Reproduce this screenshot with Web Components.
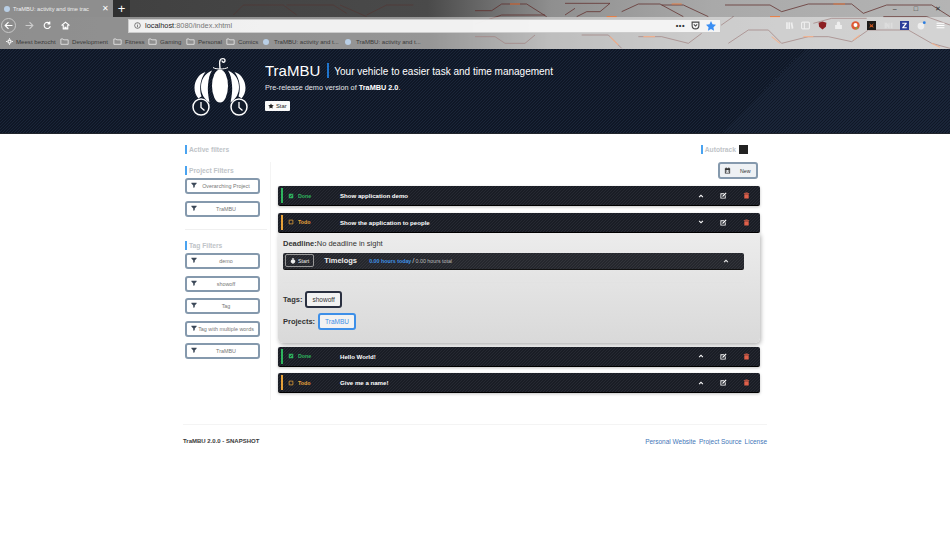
<!DOCTYPE html>
<html>
<head>
<meta charset="utf-8">
<title>TraMBU</title>
<style>
  html, body { margin: 0; background: #fff; font-family: "Liberation Sans", Arial, sans-serif; }
</style>
</head>
<body>
<browser-chrome></browser-chrome>
<hero-banner></hero-banner>
<app-main></app-main>

<script>
// all icons live here so the components only need a name
const ICONS = {
    funnel: '<path d="M1 2h14v2L10 9v5l-4 1V9L1 4z"/>',
    calendar: '<path fill-rule="evenodd" d="M2 3h2V1h2v2h4V1h2v2h2v12H2zm2 4v6h8V7z"/><path d="M5 8h2v2H5zM9 8h2v2H9z"/>',
    up: '<path d="M8 4l6 6-2 2-4-4-4 4-2-2z"/>',
    down: '<path d="M8 12L2 6l2-2 4 4 4-4 2 2z"/>',
    edit: '<path d="M1 3h9L8 5H3v8h8V9l2-2v8H1z"/><path d="M6 8l7-7 2 2-7 7-3 1z"/>',
    trash: '<path d="M6 1h4l1 1h3v2H2V2h3zM3 5h10v10H3z"/>',
    stopwatch: '<path d="M6 0h4v2H9v1.100a6 6 0 1 1-2 0V2H6z"/>',
    star: '<path d="M8 1l2.200 4.600 5 .7-3.600 3.500.9 5L8 12.400 3.500 14.800l.9-5L.8 6.300l5-.7z"/>',
    folder: '<path fill="none" stroke="currentColor" stroke-width="1.300" d="M1.500 3.500h4l1 1.500h8v8h-13z"/>',
    gear: '<circle cx="8" cy="8" r="3.500" fill="none" stroke="currentColor" stroke-width="3"/><path d="M7 0h2v3H7zM7 13h2v3H7zM0 7h3v2H0zM13 7h3v2h-3z"/>',
    check: '<path fill-rule="evenodd" d="M2 2h12v12H2zm2.500 6L7 11l5-6-1.200-1L7 8.400 5.500 6.800z"/>',
    box: '<path fill="none" stroke="currentColor" stroke-width="2" d="M3 3h10v10H3z"/>'
};

class UiIcon extends HTMLElement {
    static get observedAttributes() {
        return ['name', 'size'];
    }

    constructor() {
        super();
        this.attachShadow({ mode: 'open' });
    }

    attributeChangedCallback() {
        this.render();
    }

    connectedCallback() {
        this.render();
    }

    render() {
        const size = this.getAttribute('size') || 7;
        const shape = ICONS[this.getAttribute('name')] || '';
        this.shadowRoot.innerHTML = `
            <style>:host{display:inline-flex;flex:none;line-height:0}</style>
            <svg width="${size}" height="${size}" viewBox="0 0 16 16" fill="currentColor">${shape}</svg>`;
    }
}
customElements.define('ui-icon', UiIcon);

const chromeTemplate = document.createElement('template');
chromeTemplate.innerHTML = `
<style>
    :host {
        display: block; position: relative; height: 49px; overflow: hidden;
        background: linear-gradient(90deg, #3d3d3d 0, #4a4a4a 45%, #8f8f8f 58%, #a9a9a9 75%, #b4b4b4 100%);
        font: 7px "Liberation Sans", Arial, sans-serif; color: #333;
    }
    .hex { position: absolute; left: 0; top: 0; width: 950px; height: 49px; }
    .rows { position: relative; display: flex; flex-direction: column; height: 49px; }
    .tabs { height: 17px; display: flex; align-items: stretch; }
    .tab { width: 113px; background: #8e8e8e; display: flex; align-items: center; gap: 3px; padding: 0 4px; box-sizing: border-box; color: #eee; font-size: 5.700px; white-space: nowrap; }
    .tab span { flex: 1; }
    .tab b { font-weight: 400; font-size: 8px; color: #fff; }
    .fav { width: 6px; height: 6px; border-radius: 50%; background: #b9cfe6; flex: none; }
    .plus { width: 17px; background: #303030; color: #fff; font-size: 13px; display: flex; align-items: center; justify-content: center; }
    .winbtns { margin-left: auto; display: flex; align-items: center; gap: 17px; padding-right: 9px; color: #333; font-size: 7px; }
    .nav { height: 17px; background: rgba(255,255,255,.42); display: flex; align-items: center; box-sizing: border-box; padding: 0 0 0 1px; }
    .back { width: 15px; height: 15px; border-radius: 50%; background: #8d8d8d; border: 1px solid #c8c8c8; box-sizing: border-box; display: flex; align-items: center; justify-content: center; }
    .navbtns { display: flex; align-items: center; gap: 9px; width: 112px; padding-left: 9px; box-sizing: border-box; }
    .url { width: 593px; height: 14px; background: rgba(245,245,245,.95); display: flex; align-items: center; padding: 0 4px 0 5px; box-sizing: border-box; font-size: 7.400px; color: #777; gap: 4px; border: 1px solid #ccc; }
    .url strong { font-weight: 400; color: #222; }
    .url .end { margin-left: auto; display: flex; align-items: center; gap: 6px; }
    .tools { flex: 1; display: flex; align-items: center; gap: 7.500px; padding-left: 63.500px; }
    .t { width: 9px; height: 9px; flex: none; }
    .marks { height: 15px; background: rgba(255,255,255,.42); display: flex; align-items: center; padding-left: 6px; color: #3a3a3a; font-size: 6.100px; white-space: nowrap; }
    .marks span { display: inline-flex; align-items: center; gap: 3px; }
    .marks ui-icon { color: #f2f2f2; }
    .marks i { width: 6px; height: 6px; border-radius: 50%; background: #b9cfe6; margin-right: 2px; }
</style>
<svg class="hex" viewBox="0 0 2850 147" fill="none" stroke-width="2.200">
    <g stroke="#5b2a26" opacity=".55">
        <path d="M700 45L730 15H850L890 45M860 15H1000L1040 40M1020 15L1100 50M1100 45L1160 15H1240"/>
    </g>
    <g stroke="#5e2a28">
        <path d="M1425 32H1475L1505 12H1580L1640 50M1695 10H1830L1800 35H1760L1730 50M1865 35L1915 12H1980L2050 50M1985 15H2050L2125 50"/>
        <path d="M2175 15H2310L2345 35L2425 12H2555L2590 40L2660 15H2795L2850 50"/>
        <path d="M1425 72L1505 45H1635M1695 45L1725 25M2200 50L2150 85M2245 90H2305L2345 130"/>
        <path d="M1425 110H1485L1515 130H1575L1605 105M1745 105H1825L1865 145M1915 110H1985L2065 130L2105 100"/>
        <path d="M2185 130L2245 90M2345 130L2425 110H2485L2555 125L2605 90H2725L2795 130L2850 145"/>
        <path d="M2440 70L2495 55H2600M2650 50H2780L2850 75"/>
    </g>
    <g stroke="#f07a3a" stroke-width="3.500" opacity=".85">
        <path d="M1530 12h30M2015 12h30M2500 12h35M1820 50h30M2310 50h30M1930 110h35M2410 110h30M1830 110l25 25M2315 110l25 20M2560 120l20-15M2795 130l25 12"/>
    </g>
</svg>
<div class="rows">
    <div class="tabs">
        <div class="tab"><i class="fav"></i><span>TraMBU: activity and time trac</span><b>&#x2715;</b></div>
        <div class="plus">+</div>
        <div class="winbtns"><span>&#x2013;</span><span>&#x25A1;</span><span>&#x2715;</span></div>
    </div>
    <div class="nav">
        <div class="back"><svg width="9" height="9" viewBox="0 0 16 16" fill="none" stroke="#fff" stroke-width="2"><path d="M8 2L2 8l6 6M2 8h13"/></svg></div>
        <div class="navbtns">
            <svg width="9" height="9" viewBox="0 0 16 16" fill="none" stroke="#ccc" stroke-width="2"><path d="M8 2l6 6-6 6M14 8H1"/></svg>
            <svg width="9" height="9" viewBox="0 0 16 16" fill="none" stroke="#fff" stroke-width="2"><path d="M13 9a5.500 5.500 0 1 1-1.500-5M12 1v4H8"/></svg>
            <svg width="9" height="9" viewBox="0 0 16 16" fill="none" stroke="#fff" stroke-width="2"><path d="M1 8l7-6 7 6M4 7v7h3v-3h2v3h3V7"/></svg>
        </div>
        <div class="url">
            <svg width="7" height="7" viewBox="0 0 16 16" fill="none" stroke="#444" stroke-width="1.500"><circle cx="8" cy="8" r="6.500"/><path d="M8 7v5M8 4v1.500"/></svg>
            <div><strong>localhost</strong>:8080/index.xhtml</div>
            <div class="end">
                <span style="color:#333;font-weight:700;letter-spacing:.5px">&#x2022;&#x2022;&#x2022;</span>
                <svg width="9" height="9" viewBox="0 0 16 16" fill="none" stroke="#444" stroke-width="2"><path d="M2 2h12v6a6 6 0 0 1-12 0zM5 6l3 3 3-3"/></svg>
                <svg width="10" height="10" viewBox="0 0 16 16" fill="#3b8ef3"><path d="M8 0l2.400 5.200 5.600.7-4.100 3.900 1 5.600L8 12.700 3.100 15.400l1-5.600L0 5.900l5.600-.7z"/></svg>
            </div>
        </div>
        <div class="tools">
            <svg class="t" viewBox="0 0 16 16" fill="#eee"><path d="M2 2h3v12H2zM6 2h3v12H6zM10 3l3-1 2 11-3 1z"/></svg>
            <svg class="t" viewBox="0 0 16 16" fill="none" stroke="#eee" stroke-width="2"><rect x="1" y="2" width="14" height="12" rx="2"/><path d="M6 2v12"/></svg>
            <svg class="t" viewBox="0 0 16 16" fill="#8c1f22"><path d="M1 3l7-2 7 2-1 7-6 5-6-5z"/></svg>
            <svg class="t" viewBox="0 0 16 16" fill="#eee"><path d="M5 7V4a3 3 0 0 1 6 0v3h3v7H2V7z"/></svg>
            <svg class="t" viewBox="0 0 16 16"><circle cx="8" cy="8" r="7.500" fill="#de5833"/><circle cx="8" cy="7" r="3.500" fill="#fff"/><path d="M8 11l5 1-4 3z" fill="#65bc46"/></svg>
            <svg class="t" viewBox="0 0 16 16"><rect width="16" height="16" fill="#1c1a18"/><path d="M4 4l4 3 4-3-2 4 2 4-4-2-4 2 2-4z" fill="#c8561f"/></svg>
            <svg class="t" viewBox="0 0 16 16" fill="#ddd"><path d="M1 3h4l3 4V3h2v10H8L5 9v4H1zM12 3h3v10h-3z"/></svg>
            <svg class="t" viewBox="0 0 16 16"><rect width="16" height="16" fill="#2c3e9a"/><path d="M4 3h8v2l-5 6h5v2H4v-2l5-6H4z" fill="#fff"/></svg>
            <svg class="t" viewBox="0 0 16 16"><circle cx="7" cy="9" r="6" fill="#eee"/><circle cx="13" cy="3" r="2.500" fill="#2a7de1"/></svg>
            <svg class="t" style="margin-left:2.500px" viewBox="0 0 16 16" fill="#fff"><path d="M1 3h14v2H1zM1 7h14v2H1zM1 11h14v2H1z"/></svg>
        </div>
    </div>
    <div class="marks">
        <span style="width:54px"><ui-icon name="gear" size="7"></ui-icon>Meest bezocht</span>
        <span style="width:53px"><ui-icon name="folder" size="9"></ui-icon>Development</span>
        <span style="width:35px"><ui-icon name="folder" size="9"></ui-icon>Fitness</span>
        <span style="width:38px"><ui-icon name="folder" size="9"></ui-icon>Gaming</span>
        <span style="width:40px"><ui-icon name="folder" size="9"></ui-icon>Personal</span>
        <span style="width:37px"><ui-icon name="folder" size="9"></ui-icon>Comics</span>
        <span style="width:82px"><i></i>TraMBU: activity and t...</span>
        <span><i></i>TraMBU: activity and t...</span>
    </div>
</div>`;

class BrowserChrome extends HTMLElement {
    constructor() {
        super();
        this.attachShadow({ mode: 'open' });
        this.shadowRoot.appendChild(chromeTemplate.content.cloneNode(true));
    }
}
customElements.define('browser-chrome', BrowserChrome);

const heroTemplate = document.createElement('template');
heroTemplate.innerHTML = `
<style>
    :host {
        display: block; height: 85px; box-sizing: border-box; color: #fff;
        background: repeating-linear-gradient(135deg, #0f1726 0, #0f1726 1.060px, #1a2538 1.060px, #1a2538 2.120px);
        border-bottom: 1px solid #20242b;
    }
    .inner { width: 584px; margin: 0 auto; display: flex; height: 100%; box-sizing: border-box; padding: 7px 0 0 8px; }
    .copy { margin-left: 14px; padding-top: 4px; }
    h1 { margin: 0; font-weight: 400; font-size: 15px; line-height: 18px; display: flex; align-items: center; }
    h1 i { width: 2px; height: 15px; background: #1f74cc; margin: 0 5px 0 7px; }
    h1 span { font-size: 10px; margin-top: 3px; }
    p { margin: 2px 0 0; font-size: 7.300px; line-height: 10px; color: #e4e6ea; }
    p b { color: #fff; }
    .star { margin-top: 8px; display: flex; width: fit-content; align-items: center; gap: 2px; background: #fafafa; color: #222; font-size: 5.800px; height: 10px; padding: 0 3px; border-radius: 1px; }
</style>
<div class="inner">
    <svg width="60" height="60" viewBox="0 0 60 60" style="flex:none">
        <defs>
            <g id="lobes">
                <path d="M21 14.500C14 17 10 24 10 31C10 37.500 13 43 18.500 46.500C17 39 16.500 34 17 29C17.500 23 18.500 18 21 14.500Z"/>
                <path d="M14.500 16C7.500 18 3.500 25 3.500 32C3.500 36 5 40 7.500 42.500C8.500 41.500 9.500 41 10.500 40.500C8 33 9 23 14.500 16Z"/>
            </g>
        </defs>
        <g fill="#fff">
            <ellipse cx="29" cy="30" rx="8" ry="16.500"/>
            <use href="#lobes"/>
            <use href="#lobes" transform="matrix(-1 0 0 1 58 0)"/>
        </g>
        <path d="M29 13C29 9 28 7 29 4.500C30 2 34 2 34 4.500S31 6.500 31 4.500" fill="none" stroke="#fff" stroke-width="1.400"/>
        <path d="M22 11.500C25 13.500 33 13.500 37 11.500" fill="none" stroke="#fff" stroke-width="1"/>
        <g fill="#121b2a" stroke="#fff" stroke-width="1.500">
            <circle cx="10" cy="51" r="8"/><circle cx="48" cy="51" r="8"/>
        </g>
        <path d="M10 46v5.500l3.500 3M48 46v5.500l3.500 3" fill="none" stroke="#fff" stroke-width="1.300"/>
    </svg>
    <div class="copy">
        <h1>TraMBU<i></i><span>Your vehicle to easier task and time management</span></h1>
        <p>Pre-release demo version of <b>TraMBU 2.0</b>.</p>
        <div class="star"><ui-icon name="star" size="6"></ui-icon>Star</div>
    </div>
</div>`;

class HeroBanner extends HTMLElement {
    constructor() {
        super();
        this.attachShadow({ mode: 'open' });
        this.shadowRoot.appendChild(heroTemplate.content.cloneNode(true));
    }
}
customElements.define('hero-banner', HeroBanner);

class SectionTitle extends HTMLElement {
    constructor() {
        super();
        this.attachShadow({ mode: 'open' }).innerHTML = `
            <style>
                :host { display: block; border-left: 2px solid #4aa3f0; padding-left: 2px; font: 700 6.700px/9px "Liberation Sans", Arial, sans-serif; color: #c0c4c8; white-space: nowrap; }
            </style>
            <slot></slot>`;
    }
}
customElements.define('section-title', SectionTitle);

class FilterButton extends HTMLElement {
    constructor() {
        super();
        this.attachShadow({ mode: 'open' }).innerHTML = `
            <style>
                :host { display: flex; align-items: center; box-sizing: border-box; width: 75px; height: 16px; padding: 0 3px 0 4px; border: 2px solid #8599ad; border-radius: 3px; background: #fff; font: 5.400px "Liberation Sans", Arial, sans-serif; color: #777; white-space: nowrap; }
                ui-icon { color: #3c4858; margin-top: -2px; }
                span { flex: 1; text-align: center; }
            </style>
            <ui-icon name="funnel" size="6"></ui-icon><span><slot></slot></span>`;
    }
}
customElements.define('filter-button', FilterButton);

const taskTemplate = document.createElement('template');
taskTemplate.innerHTML = `
<style>
    :host {
        display: flex; align-items: center; box-sizing: border-box; height: 20px; color: #fff;
        background: repeating-linear-gradient(135deg, #1a1d25 0, #1a1d25 1.060px, #262932 1.060px, #262932 2.120px);
        border-bottom: 1px solid #000; border-radius: 2px;
        font: 700 6.100px "Liberation Sans", Arial, sans-serif;
        box-shadow: 0 1px 3px rgba(0,0,0,.25);
    }
    .bar { width: 2px; height: 15px; margin-left: 3px; flex: none; background: var(--c); }
    .state { display: flex; align-items: center; color: var(--c); margin-left: 5px; width: 52px; font-size: 5.300px; gap: 4px; flex: none; }
    .title { flex: 1; white-space: nowrap; }
    .act { display: flex; align-items: center; padding-right: 2px; }
    .act ui-icon { width: 23px; justify-content: center; }
    .act .del { color: #e0604a; }
</style>
<i class="bar"></i>
<div class="state"><ui-icon size="6"></ui-icon><span></span></div>
<div class="title"><slot></slot></div>
<div class="act">
    <ui-icon class="chev" size="6"></ui-icon>
    <ui-icon name="edit" size="7"></ui-icon>
    <ui-icon class="del" name="trash" size="7"></ui-icon>
</div>`;

class TaskBar extends HTMLElement {
    constructor() {
        super();
        this.attachShadow({ mode: 'open' });
        this.shadowRoot.appendChild(taskTemplate.content.cloneNode(true));
    }
    connectedCallback() {
        const root = this.shadowRoot;
        const done = this.getAttribute('status') === 'done';
        this.style.setProperty('--c', done ? '#2fb45e' : '#e8a33a');
        root.querySelector('.state ui-icon').setAttribute('name', done ? 'check' : 'box');
        root.querySelector('.state span').textContent = done ? 'Done' : 'Todo';
        root.querySelector('.chev').setAttribute('name', this.hasAttribute('open') ? 'down' : 'up');
    }
}
customElements.define('task-bar', TaskBar);

class TimelogBar extends HTMLElement {
    constructor() {
        super();
        this.attachShadow({ mode: 'open' }).innerHTML = `
            <style>
                :host {
                    display: flex; align-items: center; height: 17px; box-sizing: border-box; margin-top: 4px; color: #eee;
                    background: repeating-linear-gradient(135deg, #25272d 0, #25272d 1.060px, #32343a 1.060px, #32343a 2.120px);
                    border-bottom: 1px solid #111; border-radius: 2px; font: 5.300px "Liberation Sans", Arial, sans-serif;
                }
                .start { display: flex; align-items: center; gap: 2px; height: 13px; padding: 0 4px; margin-left: 2px; border: 1px solid #999; border-radius: 2px; box-sizing: border-box; }
                h3 { margin: 0 0 0 10px; font-size: 7.500px; width: 45px; }
                b { color: #3f93e8; }
                i { font-style: normal; font-size: 8px; margin: 0 1px; }
                .sum { flex: 1; color: #bbb; }
                ui-icon { margin-right: 15px; }
            </style>
            <div class="start"><ui-icon name="stopwatch" size="6" style="margin:0"></ui-icon>Start</div>
            <h3>Timelogs</h3>
            <div class="sum"><b>0.00 hours today</b><i>/</i>0.00 hours total</div>
            <ui-icon name="up" size="6"></ui-icon>`;
    }
}
customElements.define('timelog-bar', TimelogBar);

class TagChip extends HTMLElement {
    constructor() {
        super();
        this.attachShadow({ mode: 'open' }).innerHTML = `
            <style>
                :host { display: inline-flex; align-items: center; justify-content: center; box-sizing: border-box; height: 17px; padding: 0 5px; border: 2px solid var(--chip, #2a3040); color: var(--chip-text, #333); border-radius: 3px; background: #f2f2f2; font: 6.500px "Liberation Sans", Arial, sans-serif; }
            </style>
            <slot></slot>`;
    }
}
customElements.define('tag-chip', TagChip);

const taskDetailTemplate = document.createElement('template');
taskDetailTemplate.innerHTML = `
<style>
    :host {
        display: block; box-sizing: border-box; height: 110px; padding: 6px 16px 0 5px;
        background: linear-gradient(180deg, #ececec, #d9d9d9);
        border-radius: 0 0 5px 5px; box-shadow: 1px 2px 4px rgba(0,0,0,.3);
        font: 7.500px "Liberation Sans", Arial, sans-serif; color: #333;
    }
    .dead { line-height: 10px; }
    hr { border: 0; border-top: 1px solid #e2e2e2; margin: 12px 0 8px; }
    .row { display: flex; align-items: center; gap: 3px; margin-bottom: 5px; font-weight: 700; }
    .row tag-chip { font-weight: 400; }
</style>
<div class="dead"><b>Deadline:</b>No deadline in sight</div>
<timelog-bar></timelog-bar>
<hr>
<div class="row"><span>Tags:</span><tag-chip>showoff</tag-chip></div>
<div class="row"><span>Projects:</span><tag-chip style="--chip:#3d8fe8;--chip-text:#3d8fe8">TraMBU</tag-chip></div>`;

class TaskDetail extends HTMLElement {
    constructor() {
        super();
        this.attachShadow({ mode: 'open' });
        this.shadowRoot.appendChild(taskDetailTemplate.content.cloneNode(true));
    }
}
customElements.define('task-detail', TaskDetail);

const mainTemplate = document.createElement('template');
mainTemplate.innerHTML = `
<style>
    :host { display: block; width: 584px; margin: 0 auto; font-family: "Liberation Sans", Arial, sans-serif; }
    .top { display: flex; justify-content: space-between; align-items: center; height: 10px; margin-top: 10px; padding: 0 19px 0 2px; }
    .auto { display: flex; align-items: center; gap: 3px; }
    .auto i { width: 9px; height: 9px; background: #222; display: block; }
    .cols { display: flex; margin-top: 8px; }
    aside { box-sizing: border-box; width: 88px; height: 238px; border-right: 1px solid #f4f4f4; padding: 4px 0 0 2px; display: flex; flex-direction: column; }
    aside filter-button { margin-bottom: 6.500px; }
    aside section-title { margin-bottom: 3px; }
    aside hr { border: 0; border-top: 1px solid #f0f0f0; width: 82px; margin: 6px 0 11px; }
    .tasks { width: 482px; margin-left: 7px; display: flex; flex-direction: column; }
    .new { align-self: flex-end; margin: 0 2px 7px 0; box-sizing: border-box; width: 40px; height: 17px; display: flex; align-items: center; gap: 9px; padding-left: 4px; background: #eef1f4; border: 2px solid #8599ad; border-radius: 3px; font: 5.300px "Liberation Sans", Arial, sans-serif; color: #333; }
    task-bar { margin-bottom: 6.500px; }
    task-bar[open] { margin-bottom: 0; }
    task-detail { margin-bottom: 4px; }
    footer { margin-top: 24px; border-top: 1px solid #f4f4f4; display: flex; justify-content: space-between; padding-top: 13px; font-size: 6.500px; }
    footer b { color: #3a3a3a; font-size: 6px; }
    nav { display: flex; gap: 3px; color: #3f76b8; }
</style>
<div class="top">
    <section-title>Active filters</section-title>
    <div class="auto"><section-title>Autotrack</section-title><i></i></div>
</div>
<div class="cols">
    <aside>
        <section-title>Project Filters</section-title>
        <filter-button>Overarching Project</filter-button>
        <filter-button>TraMBU</filter-button>
        <hr>
        <section-title>Tag Filters</section-title>
        <filter-button>demo</filter-button>
        <filter-button>showoff</filter-button>
        <filter-button>Tag</filter-button>
        <filter-button>Tag with multiple words</filter-button>
        <filter-button>TraMBU</filter-button>
    </aside>
    <div class="tasks">
        <div class="new"><ui-icon name="calendar" size="7"></ui-icon>New</div>
        <task-bar status="done">Show application demo</task-bar>
        <task-bar status="todo" open>Show the application to people</task-bar>
        <task-detail></task-detail>
        <task-bar status="done">Hello World!</task-bar>
        <task-bar status="todo">Give me a name!</task-bar>
    </div>
</div>
<footer>
    <b>TraMBU 2.0.0 - SNAPSHOT</b>
    <nav><span>Personal Website</span><span>Project Source</span><span>License</span></nav>
</footer>`;

class AppMain extends HTMLElement {
    constructor() {
        super();
        this.attachShadow({ mode: 'open' });
        this.shadowRoot.appendChild(mainTemplate.content.cloneNode(true));
    }
}
customElements.define('app-main', AppMain);
</script>
</body>
</html>
